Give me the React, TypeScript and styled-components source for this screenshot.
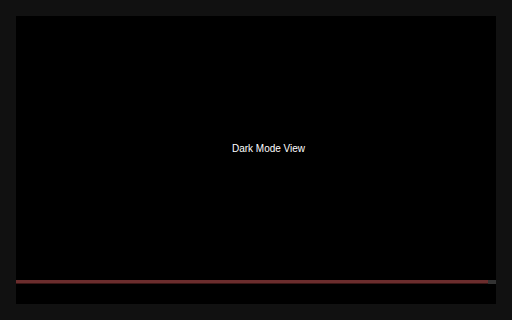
import styled, { createGlobalStyle } from "styled-components";

const Global = createGlobalStyle`
  html, body {
    margin: 0;
    padding: 0;
    background: #111111;
  }
  body {
    font-family: "Liberation Sans", Arial, sans-serif;
  }
`;

const Page = styled.div`
  width: 512px;
  height: 320px;
  box-sizing: border-box;
  padding: 16px;
  background: #111111;
`;

const Player = styled.div`
  height: 100%;
  display: flex;
  flex-direction: column;
  background: #000000;
`;

const Screen = styled.div`
  flex: 1;
  display: flex;
  align-items: center;
  justify-content: center;
  padding-left: 25px;
  color: #ffffff;
  font-size: 10px;
`;

const Track = styled.div`
  height: 4px;
  background: #333333;
  display: flex;
`;

const Fill = styled.div`
  height: 100%;
  background: #6b2d2d;
  border-bottom: 1px solid #3a1616;
  box-sizing: border-box;
`;

const Controls = styled.div`
  height: 20px;
`;

const App: React.FC = () => {
  const progress = 472 / 480;

  return (
    <>
      <Global />
      <Page>
        <Player>
          <Screen>Dark Mode View</Screen>
          <Track>
            <Fill style={{ width: `${progress * 100}%` }} />
          </Track>
          <Controls />
        </Player>
      </Page>
    </>
  );
};

export default App;
